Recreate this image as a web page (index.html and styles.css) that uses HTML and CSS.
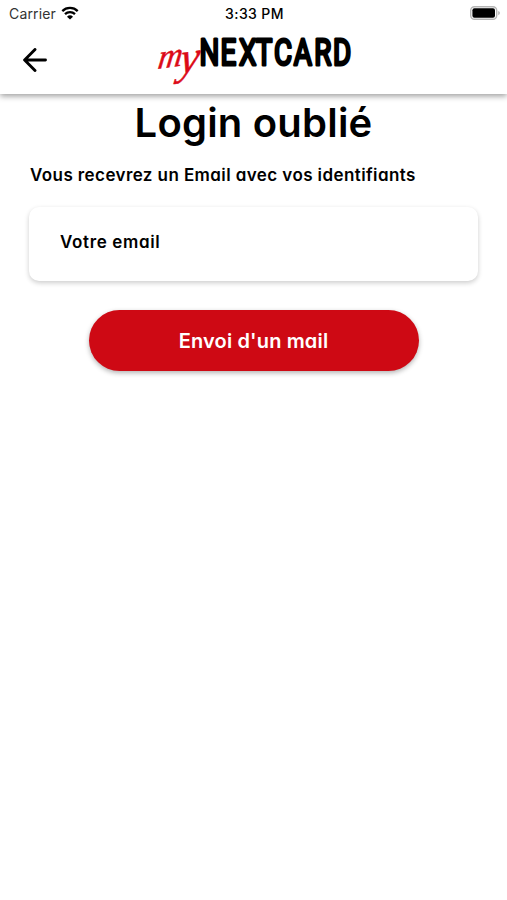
FILE: index.html
```html
<!DOCTYPE html>
<html lang="fr">
<head>
    <meta charset="UTF-8">
    <meta name="viewport" content="width=device-width, initial-scale=1.0">
    <title>Login oublié</title>
    <link rel="stylesheet" href="styles.css">
</head>
<body>
    <header class="header">
        <!-- Barre d'état -->
        <div class="status-bar">
            <div class="status-left">
                <span class="carrier">Carrier</span>
                <svg class="wifi" viewBox="0 0 18 14" width="18" height="14">
                    <path d="M1.3 5.1a11 11 0 0 1 15.4 0M4 8.1a7.2 7.2 0 0 1 10 0" fill="none" stroke="#000" stroke-width="2.3"/>
                    <path d="M9 13.6 6 10.7a4.4 4.4 0 0 1 6 0z"/>
                </svg>
            </div>
            <span class="time">3:33 PM</span>
            <svg class="battery" viewBox="0 0 30 14" width="30" height="14">
                <rect x=".7" y=".7" width="26" height="12.6" rx="3.8" fill="#fff" stroke="#b5b5b5" stroke-width="1.4"/>
                <rect x="2.4" y="2.3" width="22.6" height="9.4" rx="2"/>
                <path d="M28.3 5v4.2q1.5-.6 1.5-2.1T28.3 5z" fill="#aaa"/>
            </svg>
        </div>

        <!-- Navigation -->
        <div class="nav">
            <a class="back" href="#" aria-label="Retour">
                <svg viewBox="0 0 24 24" width="24" height="24">
                    <path d="M22.5 12H2M12 1.5 1.6 12 12 22.5" fill="none" stroke="#000" stroke-width="2.9" stroke-linecap="round" stroke-linejoin="round"/>
                </svg>
            </a>
            <svg class="logo" viewBox="0 0 200 58" width="200" height="58">
                <text class="logo-my" transform="translate(3 38) rotate(-8) skewX(-16)">m<tspan class="logo-y" x="23" y="8">y</tspan></text>
                <text class="logo-name" transform="translate(0 33.7) scale(.74 1)" x="61.5 90 115 137.5 162 189 216.5 242">NEXTCARD</text>
            </svg>
        </div>
    </header>

    <main class="content">
        <h1>Login oublié</h1>
        <form class="login-form">
            <label for="email">Vous recevrez un Email avec vos identifiants</label>
            <input type="text" id="email" placeholder="Votre email">
            <button type="submit">Envoi d'un mail</button>
        </form>
    </main>
</body>
</html>
```

FILE: styles.css
```css
* {
    box-sizing: border-box;
}

body {
    margin: 0;
    min-height: 100vh;
    font-family: Inter, sans-serif;
    font-feature-settings: "cv11";
    background-color: #fff;
    color: #000;
}

.header {
    height: 94px;
    background-color: #fff;
    box-shadow: 0 2px 6px rgba(0, 0, 0, 0.4);
}

.status-bar {
    display: grid;
    grid-template-columns: 1fr auto 1fr;
    align-items: center;
    height: 26px;
    padding: 0 7px 0 9px;
    font-size: 14px;
    font-feature-settings: normal;
}

.status-left {
    display: flex;
    align-items: center;
    gap: 5px;
}

.carrier {
    color: #333;
    letter-spacing: 0.15px;
}

.time {
    font-weight: 500;
    letter-spacing: 0.4px;
}

.battery {
    justify-self: end;
}

.nav {
    display: flex;
    align-items: center;
    height: 68px;
    padding-left: 23px;
}

.back {
    display: flex;
}

.logo {
    margin: 0 0 0 107px;
    overflow: visible;
}

.logo-my {
    font-family: "Liberation Serif", serif;
    font-style: italic;
    font-size: 34px;
    fill: #dc0a17;
    stroke: #dc0a17;
    stroke-width: 0.5;
    stroke-linejoin: round;
}

.logo-y {
    font-size: 44px;
}

.logo-name {
    font-family: Roboto, sans-serif;
    font-weight: 400;
    font-size: 37.5px;
    stroke: #000;
    stroke-width: 3;
    stroke-linejoin: round;
}

.content {
    padding: 0 29px;
}

h1 {
    margin: 0;
    padding-top: 3px;
    font-size: 40px;
    font-weight: 600;
    line-height: 52px;
    letter-spacing: 0.2px;
    text-align: center;
}

.login-form {
    display: flex;
    flex-direction: column;
}

label {
    margin-top: 13px;
    padding-left: 1px;
    font-size: 17px;
    font-weight: 600;
    line-height: 26px;
    letter-spacing: 0.41px;
    white-space: nowrap;
}

input {
    height: 74px;
    margin-top: 19px;
    padding: 0 31px 4px;
    border: none;
    border-radius: 10px;
    background-color: #fff;
    box-shadow: 0 2px 5px rgba(0, 0, 0, 0.2);
    font: inherit;
    font-size: 17px;
    font-weight: 600;
    letter-spacing: 0.65px;
}

input::placeholder {
    color: #000;
    opacity: 1;
}

button {
    align-self: center;
    width: 330px;
    height: 61px;
    margin-top: 29px;
    padding: 0;
    border: none;
    border-radius: 31px;
    background-color: #ce0914;
    box-shadow: 0 2px 5px rgba(0, 0, 0, 0.3);
    color: #fff;
    font: inherit;
    font-size: 20px;
    font-weight: 600;
    letter-spacing: 0.15px;
    cursor: pointer;
}
```
